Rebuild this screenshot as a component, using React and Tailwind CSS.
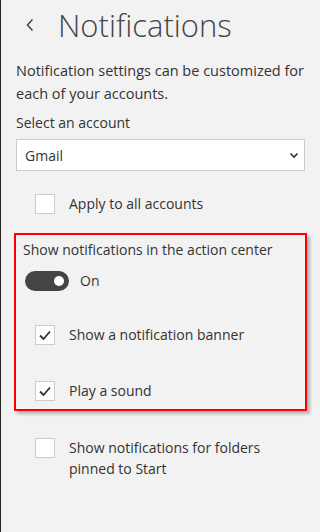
// Mail app notification settings pane.

function Check({ checked }) {
  return (
    <div className="flex h-5 w-5 shrink-0 items-center justify-center border border-[#cccccc] bg-white">
      {checked && (
        <svg width="14" height="14" viewBox="0 0 14 14" fill="none">
          <path d="M2 7.5 L5.5 11 L12 3.5" stroke="#333333" strokeWidth="1.8" />
        </svg>
      )}
    </div>
  );
}

function CheckRow({ checked, children, className = '' }) {
  return (
    <div className={`flex items-start gap-[14px] pl-[34px] ${className}`}>
      <Check checked={checked} />
      <span className="-mt-[1px] leading-[21px]">{children}</span>
    </div>
  );
}

export default function App() {
  return (
    <div
      className="h-[532px] w-[320px] overflow-hidden border-l border-[#222] bg-[#f2f2f2] text-[14px] text-[#333333]"
      style={{ fontFamily: '"Open Sans", "Noto Sans", sans-serif' }}
    >
      <div className="flex items-center pt-[5px]">
        <svg className="ml-[24px]" width="10" height="14" viewBox="0 0 10 14" fill="none">
          <path d="M7.5 1.5 L2.5 7 L7.5 12.5" stroke="#444" strokeWidth="1.5" />
        </svg>
        <h1 className="ml-[23px] text-[31px] font-light leading-[40px] text-[#444]">Notifications</h1>
      </div>

      <p className="mt-[14px] pl-[15px] pr-2 text-[14.5px] leading-[23px]">
        Notification settings can be customized for each of your accounts.
      </p>
      <p className="mt-[8px] pl-[15px] leading-[20px]">Select an account</p>

      <div className="ml-[15px] mt-[6px] flex h-[32px] w-[289px] items-center justify-between border border-[#cccccc] bg-white pl-[8px] pr-[5px]">
        <span>Gmail</span>
        <svg width="10" height="8" viewBox="0 0 10 8" fill="none">
          <path d="M1.5 2.5 L5 6 L8.5 2.5" stroke="#333" strokeWidth="1.6" />
        </svg>
      </div>

      <CheckRow className="mt-[23px]">Apply to all accounts</CheckRow>

      <div className="ml-[13px] mt-[19px] h-[178px] w-[293px] border-2 border-[#ff0000] pt-[5px] shadow-[3px_3px_3px_rgba(0,0,0,0.25)]">
        <p className="pl-[7px] leading-[20px]">Show notifications in the action center</p>
        <div className="mt-[10px] flex items-center pl-[9px]">
          <div className="flex h-5 w-[44px] items-center justify-end rounded-full bg-[#444444] pr-[5px]">
            <div className="h-[10px] w-[10px] rounded-full bg-white" />
          </div>
          <span className="ml-[11px]">On</span>
        </div>
        <CheckRow checked className="mt-[34px] -ml-[15px]">Show a notification banner</CheckRow>
        <CheckRow checked className="mt-[36px] -ml-[15px]">Play a sound</CheckRow>
      </div>

      <CheckRow className="mt-[27px]">
        Show notifications for folders
        <br />
        pinned to Start
      </CheckRow>
    </div>
  );
}
